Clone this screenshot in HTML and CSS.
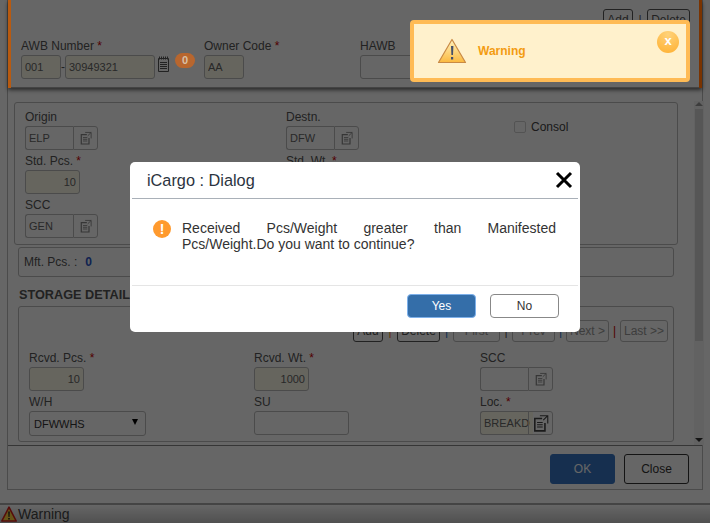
FILE: index.html
```html
<!DOCTYPE html>
<html>
<head>
	<title>iCargo : Dialog</title>
	<link rel="stylesheet" href="styles.css">
</head>
<body>
	<svg class="sprites" width="0" height="0">
		<symbol id="lookup" viewBox="0 0 14 16">
			<path d="M6 1.5h7v7M13 1.5L9 5.5" fill="none" stroke="currentColor" stroke-width="1"/>
			<path d="M8 4H1.5v11h9V8" fill="none" stroke="currentColor" stroke-width="1.4"/>
			<path d="M3.5 7.5h5M3.5 9.5h5M3.5 11.5h5" stroke="currentColor" stroke-width="1"/>
		</symbol>
	</svg>

	<div class="window">
		<div class="head">
			<div class="head-actions">
				<button class="nav-btn w30">Add</button>
				<span class="sep s14">|</span>
				<button class="nav-btn w43">Delete</button>
			</div>
			<div class="head-fields">
				<div class="awb">
					<label>AWB Number <i>*</i></label>
					<div class="awb-row">
						<input class="txt req w40" value="001">
						<span class="dash">-</span>
						<input class="txt req w90" value="30949321">
						<svg class="note" width="13" height="16" viewBox="0 0 13 16">
							<path d="M1.5 2.5h10v13h-10z" fill="none" stroke="currentColor"/>
							<path d="M2.5 .5v3M4.5 .5v3M6.5 .5v3M8.5 .5v3M10.5 .5v3M3 6.5h7M3 8.5h7M3 10.5h7M3 12.5h7" stroke="currentColor"/>
						</svg>
						<span class="badge">0</span>
					</div>
				</div>
				<div class="owner">
					<label>Owner Code <i>*</i></label>
					<input class="txt req w40" value="AA">
				</div>
				<div class="hawb">
					<label>HAWB</label>
					<input class="txt w90">
				</div>
			</div>
		</div>

		<div class="scroll">
			<div class="content">
				<div class="box top-box">
					<div class="col">
						<div class="field">
							<label>Origin</label>
							<div class="lookup"><input class="txt" value="ELP"><span class="lookup-btn"><svg width="12" height="14"><use href="#lookup"/></svg></span></div>
						</div>
						<div class="field">
							<label>Std. Pcs. <i>*</i></label>
							<input class="txt req num w55" value="10">
						</div>
						<div class="field">
							<label>SCC</label>
							<div class="lookup"><input class="txt" value="GEN"><span class="lookup-btn"><svg width="12" height="14"><use href="#lookup"/></svg></span></div>
						</div>
					</div>
					<div class="col col-mid">
						<div class="field">
							<label>Destn.</label>
							<div class="lookup"><input class="txt" value="DFW"><span class="lookup-btn"><svg width="12" height="14"><use href="#lookup"/></svg></span></div>
						</div>
						<div class="field">
							<label>Std. Wt. <i>*</i></label>
							<input class="txt req num w55">
						</div>
					</div>
					<div class="consol">
						<span class="check"></span>
						<span>Consol</span>
					</div>
				</div>

				<div class="box mft">Mft. Pcs. :<b>0</b></div>

				<h3 class="storage-title">STORAGE DETAILS</h3>
				<div class="box storage">
					<div class="nav-row">
						<button class="nav-btn w30">Add</button>
						<span class="sep s14 amber">|</span>
						<button class="nav-btn w43">Delete</button>
						<span class="sep s13 blue">|</span>
						<button class="nav-btn off w47">First</button>
						<span class="sep s12">|</span>
						<button class="nav-btn off w43">Prev</button>
						<span class="sep s11 blue">|</span>
						<button class="nav-btn off w43">Next &gt;</button>
						<span class="sep s11 red">|</span>
						<button class="nav-btn off w48">Last &gt;&gt;</button>
					</div>
					<div class="storage-grid">
						<div class="field">
							<label>Rcvd. Pcs. <i>*</i></label>
							<input class="txt req num w55" value="10">
						</div>
						<div class="field">
							<label>Rcvd. Wt. <i>*</i></label>
							<input class="txt req num w55" value="1000">
						</div>
						<div class="field">
							<label>SCC</label>
							<div class="lookup"><input class="txt"><span class="lookup-btn"><svg width="12" height="14"><use href="#lookup"/></svg></span></div>
						</div>
						<div class="field">
							<label>W/H</label>
							<div class="select">DFWWHS<span class="caret"></span></div>
						</div>
						<div class="field">
							<label>SU</label>
							<input class="txt w95">
						</div>
						<div class="field">
							<label>Loc. <i>*</i></label>
							<div class="lookup lookup-wide"><input class="txt req" value="BREAKDOWN"><span class="lookup-btn dark"><svg width="16" height="18"><use href="#lookup"/></svg></span></div>
						</div>
					</div>
				</div>
			</div>
			<div class="scrollbar">
				<span class="arrow up"></span>
				<span class="thumb"></span>
				<span class="arrow down"></span>
			</div>
		</div>

		<div class="foot">
			<button class="btn-ok">OK</button>
			<button class="btn-close">Close</button>
		</div>
	</div>

	<div class="status">
		<svg width="16" height="16" viewBox="0 0 16 16">
			<path d="M8 1.2L15.2 15H.8z" fill="#ffd23c" stroke="#d8201c" stroke-width="1.6" stroke-linejoin="round"/>
			<path d="M7.2 5.5h1.6l-.3 5.5h-1zM7.2 12h1.6v1.6H7.2z" fill="#222"/>
		</svg>
		<span>Warning</span>
	</div>

	<div class="overlay"></div>

	<div class="toast">
		<svg class="toast-icon" width="30" height="26" viewBox="0 0 30 26">
			<defs>
				<linearGradient id="tri" x1="0" y1="0" x2="0" y2="1">
					<stop offset="0" stop-color="#fff3c0"/>
					<stop offset="1" stop-color="#fbb93f"/>
				</linearGradient>
			</defs>
			<path d="M15 1.5L28.5 24.5H1.5z" fill="url(#tri)" stroke="#c98a45" stroke-width="1.2" stroke-linejoin="round"/>
			<path d="M14 8h2.4l-.4 9h-1.6zM14 19h2.2v2.6H14z" fill="#44506a"/>
		</svg>
		<span class="toast-text">Warning</span>
		<span class="toast-close">x</span>
	</div>

	<div class="dialog">
		<div class="dialog-head">
			<span>iCargo : Dialog</span>
			<svg width="18" height="18" viewBox="0 0 18 18">
				<path d="M2 2l14 14M16 2L2 16" stroke="#000" stroke-width="3"/>
			</svg>
		</div>
		<div class="dialog-body">
			<span class="info">!</span>
			<p>Received Pcs/Weight greater than Manifested Pcs/Weight.Do you want to continue?</p>
		</div>
		<div class="dialog-foot">
			<button class="btn-yes">Yes</button>
			<button class="btn-no">No</button>
		</div>
	</div>
</body>
</html>
```

FILE: styles.css
```css
* {
	box-sizing: border-box;
}
html, body {
	height: 100%;
}
body {
	background-color: #FFF;
	color: #555;
	font-family: "Liberation Sans", Arial, sans-serif;
	font-size: 12px;
	height: 523px;
	margin: 0;
	overflow: hidden;
	position: relative;
	width: 710px;
}
.sprites {
	display: none;
}
label {
	display: block;
	height: 16px;
	line-height: 14px;
}
label i {
	color: #C00;
	font-style: normal;
}
input {
	font-family: inherit;
}
.txt {
	background-color: #FFF;
	border: 1px solid #BBB;
	border-radius: 3px;
	color: #666;
	display: block;
	font-size: 11px;
	height: 24px;
	padding: 0 3px;
}
.req {
	background-color: #FFFDEC;
}
.num {
	text-align: right;
}
.w30 { width: 30px; }
.w40 { width: 40px; }
.w43 { width: 43px; }
.w47 { width: 47px; }
.w48 { width: 48px; }
.w55 { width: 55px; }
.w90 { width: 90px; }
.w95 { width: 95px; }

.window {
	border-bottom: 1px solid #BBB;
	border-left: 1px solid #BBB;
	border-right: 1px solid #BBB;
	height: 490px;
	margin-left: 7px;
	width: 696px;
}

.head {
	background-color: #FFF;
	border-bottom: 1px solid #AAA;
	box-shadow: 0 2px 4px rgba(0, 0, 0, .6);
	height: 88px;
	padding: 9px 12px 0 13px;
	position: relative;
}
/* the two stripes stay bright over the dim layer */
.head::before, .head::after {
	content: "";
	height: 88px;
	position: absolute;
	top: 0;
	width: 3px;
	z-index: 2;
}
.head::before {
	background-color: #B85A10;
	left: 0;
}
.head::after {
	background-color: #7A3300;
	right: 0;
}
.head-actions {
	align-items: center;
	display: flex;
	height: 22px;
	justify-content: flex-end;
	margin-bottom: 7px;
}
.head-fields {
	display: flex;
}
.head-fields label {
	height: 17px;
	line-height: 16px;
}
.awb {
	width: 183px;
}
.awb-row {
	align-items: center;
	display: flex;
}
.dash {
	text-align: center;
	width: 4px;
}
.note {
	color: #555;
	margin: -7px 0 0 2px;
}
.badge {
	background-color: #B8662E;
	border-radius: 8px;
	color: #D8C0A8;
	font-size: 11px;
	font-weight: bold;
	height: 15px;
	line-height: 15px;
	margin: -13px 0 0 5px;
	position: relative;
	text-align: center;
	width: 20px;
	z-index: 2;
}
.owner {
	width: 156px;
}

.nav-btn {
	background-color: #FFF;
	border: 1px solid #555;
	border-radius: 3px;
	color: #555;
	font-family: inherit;
	font-size: 12px;
	height: 22px;
	padding: 0;
	white-space: nowrap;
}
.nav-btn.off {
	border-color: #BBB;
	color: #999;
}
.sep {
	color: #555;
	font-size: 12px;
	text-align: center;
}
.s11 { width: 11px; }
.s12 { width: 12px; }
.s13 { width: 13px; }
.s14 { width: 14px; }
.sep.amber { color: #F47A0E; }
.sep.blue { color: #2E75C9; }
.sep.red { color: #C00; }

.scroll {
	border-bottom: 1px solid #888;
	display: flex;
	height: 358px;
}
.content {
	flex: none;
	padding: 14px 0 0 6px;
	width: 679px;
}
.box {
	border: 1px solid #BBB;
	border-radius: 3px;
}
.top-box {
	display: flex;
	height: 143px;
	padding: 7px 0 0 10px;
	width: 664px;
}
.col {
	flex: none;
	width: 261px;
}
.col-mid {
	width: 228px;
}
.field {
	height: 44px;
}
.lookup {
	display: flex;
	width: 73px;
}
.lookup .txt {
	border-radius: 3px 0 0 3px;
	border-right: none;
	flex: none;
	overflow: hidden;
	width: 48px;
}
.lookup-btn {
	align-items: center;
	background-color: #FFF;
	border: 1px solid #BBB;
	border-radius: 0 3px 3px 0;
	color: #888;
	display: flex;
	flex: none;
	height: 24px;
	justify-content: center;
	width: 25px;
}
.lookup-btn.dark {
	color: #444;
}
/* long value runs on under the icon */
.lookup-wide .txt {
	margin-right: -5px;
	width: 53px;
}
.lookup-wide .lookup-btn {
	background-color: transparent;
}
.consol {
	align-items: center;
	color: #444;
	display: flex;
	gap: 5px;
	height: 20px;
	margin-top: 7px;
}
.check {
	border: 1px solid #D0D0D0;
	border-radius: 2px;
	height: 12px;
	width: 12px;
}
.mft {
	height: 30px;
	line-height: 28px;
	margin: 2px 0 0 4px;
	padding-left: 5px;
	width: 656px;
}
.mft b {
	color: #2A55C9;
	margin-left: 8px;
}
.storage-title {
	color: #555;
	font-size: 12.7px;
	height: 29px;
	line-height: 16px;
	margin: 0;
	padding: 10px 0 0 5px;
}
.storage {
	height: 136px;
	margin-left: 4px;
	padding: 13px 5px 0 10px;
	width: 656px;
}
.nav-row {
	align-items: center;
	display: flex;
	justify-content: flex-end;
}
.storage-grid {
	display: grid;
	grid-template-columns: 225px 226px 1fr;
	margin-top: 9px;
}
.select {
	align-items: center;
	background-color: #FFF;
	border: 1px solid #BBB;
	border-radius: 3px;
	color: #333;
	display: flex;
	font-size: 11px;
	height: 25px;
	justify-content: space-between;
	padding: 0 7px 0 4px;
	width: 117px;
}
.caret {
	border-left: 3px solid transparent;
	border-right: 3px solid transparent;
	border-top: 6px solid #000;
	margin-top: -3px;
}
.scrollbar {
	background-color: #F4F4F4;
	display: flex;
	flex-direction: column;
	margin: 13px 0 0 7px;
	padding: 0 1px;
	width: 14px;
}
.thumb {
	background-color: #D8D8D8;
	flex: none;
	height: 232px;
	margin-top: 3px;
	width: 100%;
}
.arrow {
	align-self: center;
	border-left: 4px solid transparent;
	border-right: 4px solid transparent;
	height: 0;
	width: 0;
}
.arrow.up {
	border-bottom: 4px solid #999;
	margin-top: 1px;
}
.arrow.down {
	border-top: 4px solid #333;
	margin-top: 97px;
}
.foot {
	display: flex;
	gap: 9px;
	justify-content: flex-end;
	padding: 8px 13px 0 0;
}
.foot button {
	border-radius: 3px;
	font-family: inherit;
	font-size: 12px;
	height: 30px;
	width: 65px;
}
.btn-ok {
	background-color: #3877C6;
	border: 1px solid #3877C6;
	color: #FFF;
}
.btn-close {
	background-color: #FFF;
	border: 1px solid #333;
	color: #333;
}

.status {
	align-items: center;
	background: linear-gradient(#FFF, #C8C8C8);
	border-top: 2px solid #AAA;
	bottom: 0;
	color: #444;
	display: flex;
	font-size: 14px;
	gap: 1px;
	height: 20px;
	left: 0;
	padding-left: 1px;
	position: absolute;
	width: 710px;
}

.overlay {
	background-color: rgba(0, 0, 0, .6);
	bottom: 0;
	left: 0;
	position: absolute;
	right: 0;
	top: 0;
	z-index: 1;
}

.toast {
	align-items: center;
	background-color: #FFF1CC;
	border: 4px solid #FFBB55;
	border-radius: 4px;
	display: flex;
	height: 62px;
	left: 410px;
	padding-left: 23px;
	position: absolute;
	top: 20px;
	width: 280px;
	z-index: 3;
}
.toast-text {
	color: #F39C12;
	font-weight: bold;
	margin-left: 11px;
}
.toast-close {
	background: radial-gradient(circle at 50% 15%, #FFD27A, #FFB030);
	border-radius: 50%;
	color: #FFF;
	font-size: 13px;
	font-weight: bold;
	height: 22px;
	line-height: 20px;
	position: absolute;
	right: 7px;
	text-align: center;
	top: 7px;
	width: 22px;
}

.dialog {
	background-color: #FFF;
	border-radius: 5px;
	color: #333;
	height: 170px;
	left: 130px;
	padding: 0 2px;
	position: absolute;
	top: 162px;
	width: 450px;
	z-index: 3;
}
.dialog-head {
	align-items: center;
	border-bottom: 1px solid #A9B0B8;
	color: #2B3440;
	display: flex;
	font-size: 16.3px;
	height: 37px;
	justify-content: space-between;
	padding: 0 5px 0 15px;
}
.dialog-body {
	display: flex;
	height: 86px;
	padding: 21px 22px 0 21px;
}
.info {
	background-color: #FF9A2E;
	border-radius: 50%;
	color: #FFF;
	flex: none;
	font-size: 14px;
	font-weight: bold;
	height: 18px;
	line-height: 18px;
	margin-right: 11px;
	text-align: center;
	width: 18px;
}
.dialog-body p {
	font-size: 14px;
	line-height: 16px;
	margin: 0;
	text-align: justify;
}
.dialog-foot {
	border-top: 1px solid #E5E5E5;
	display: flex;
	gap: 14px;
	justify-content: flex-end;
	padding: 8px 19px 0 0;
}
.dialog-foot button {
	border-radius: 4px;
	font-family: inherit;
	font-size: 12px;
	height: 24px;
	width: 69px;
}
.btn-yes {
	background-color: #346EA9;
	border: 1px solid #7DB0EA;
	color: #FFF;
}
.btn-no {
	background-color: #FFF;
	border: 1px solid #888;
	color: #333;
}
```
